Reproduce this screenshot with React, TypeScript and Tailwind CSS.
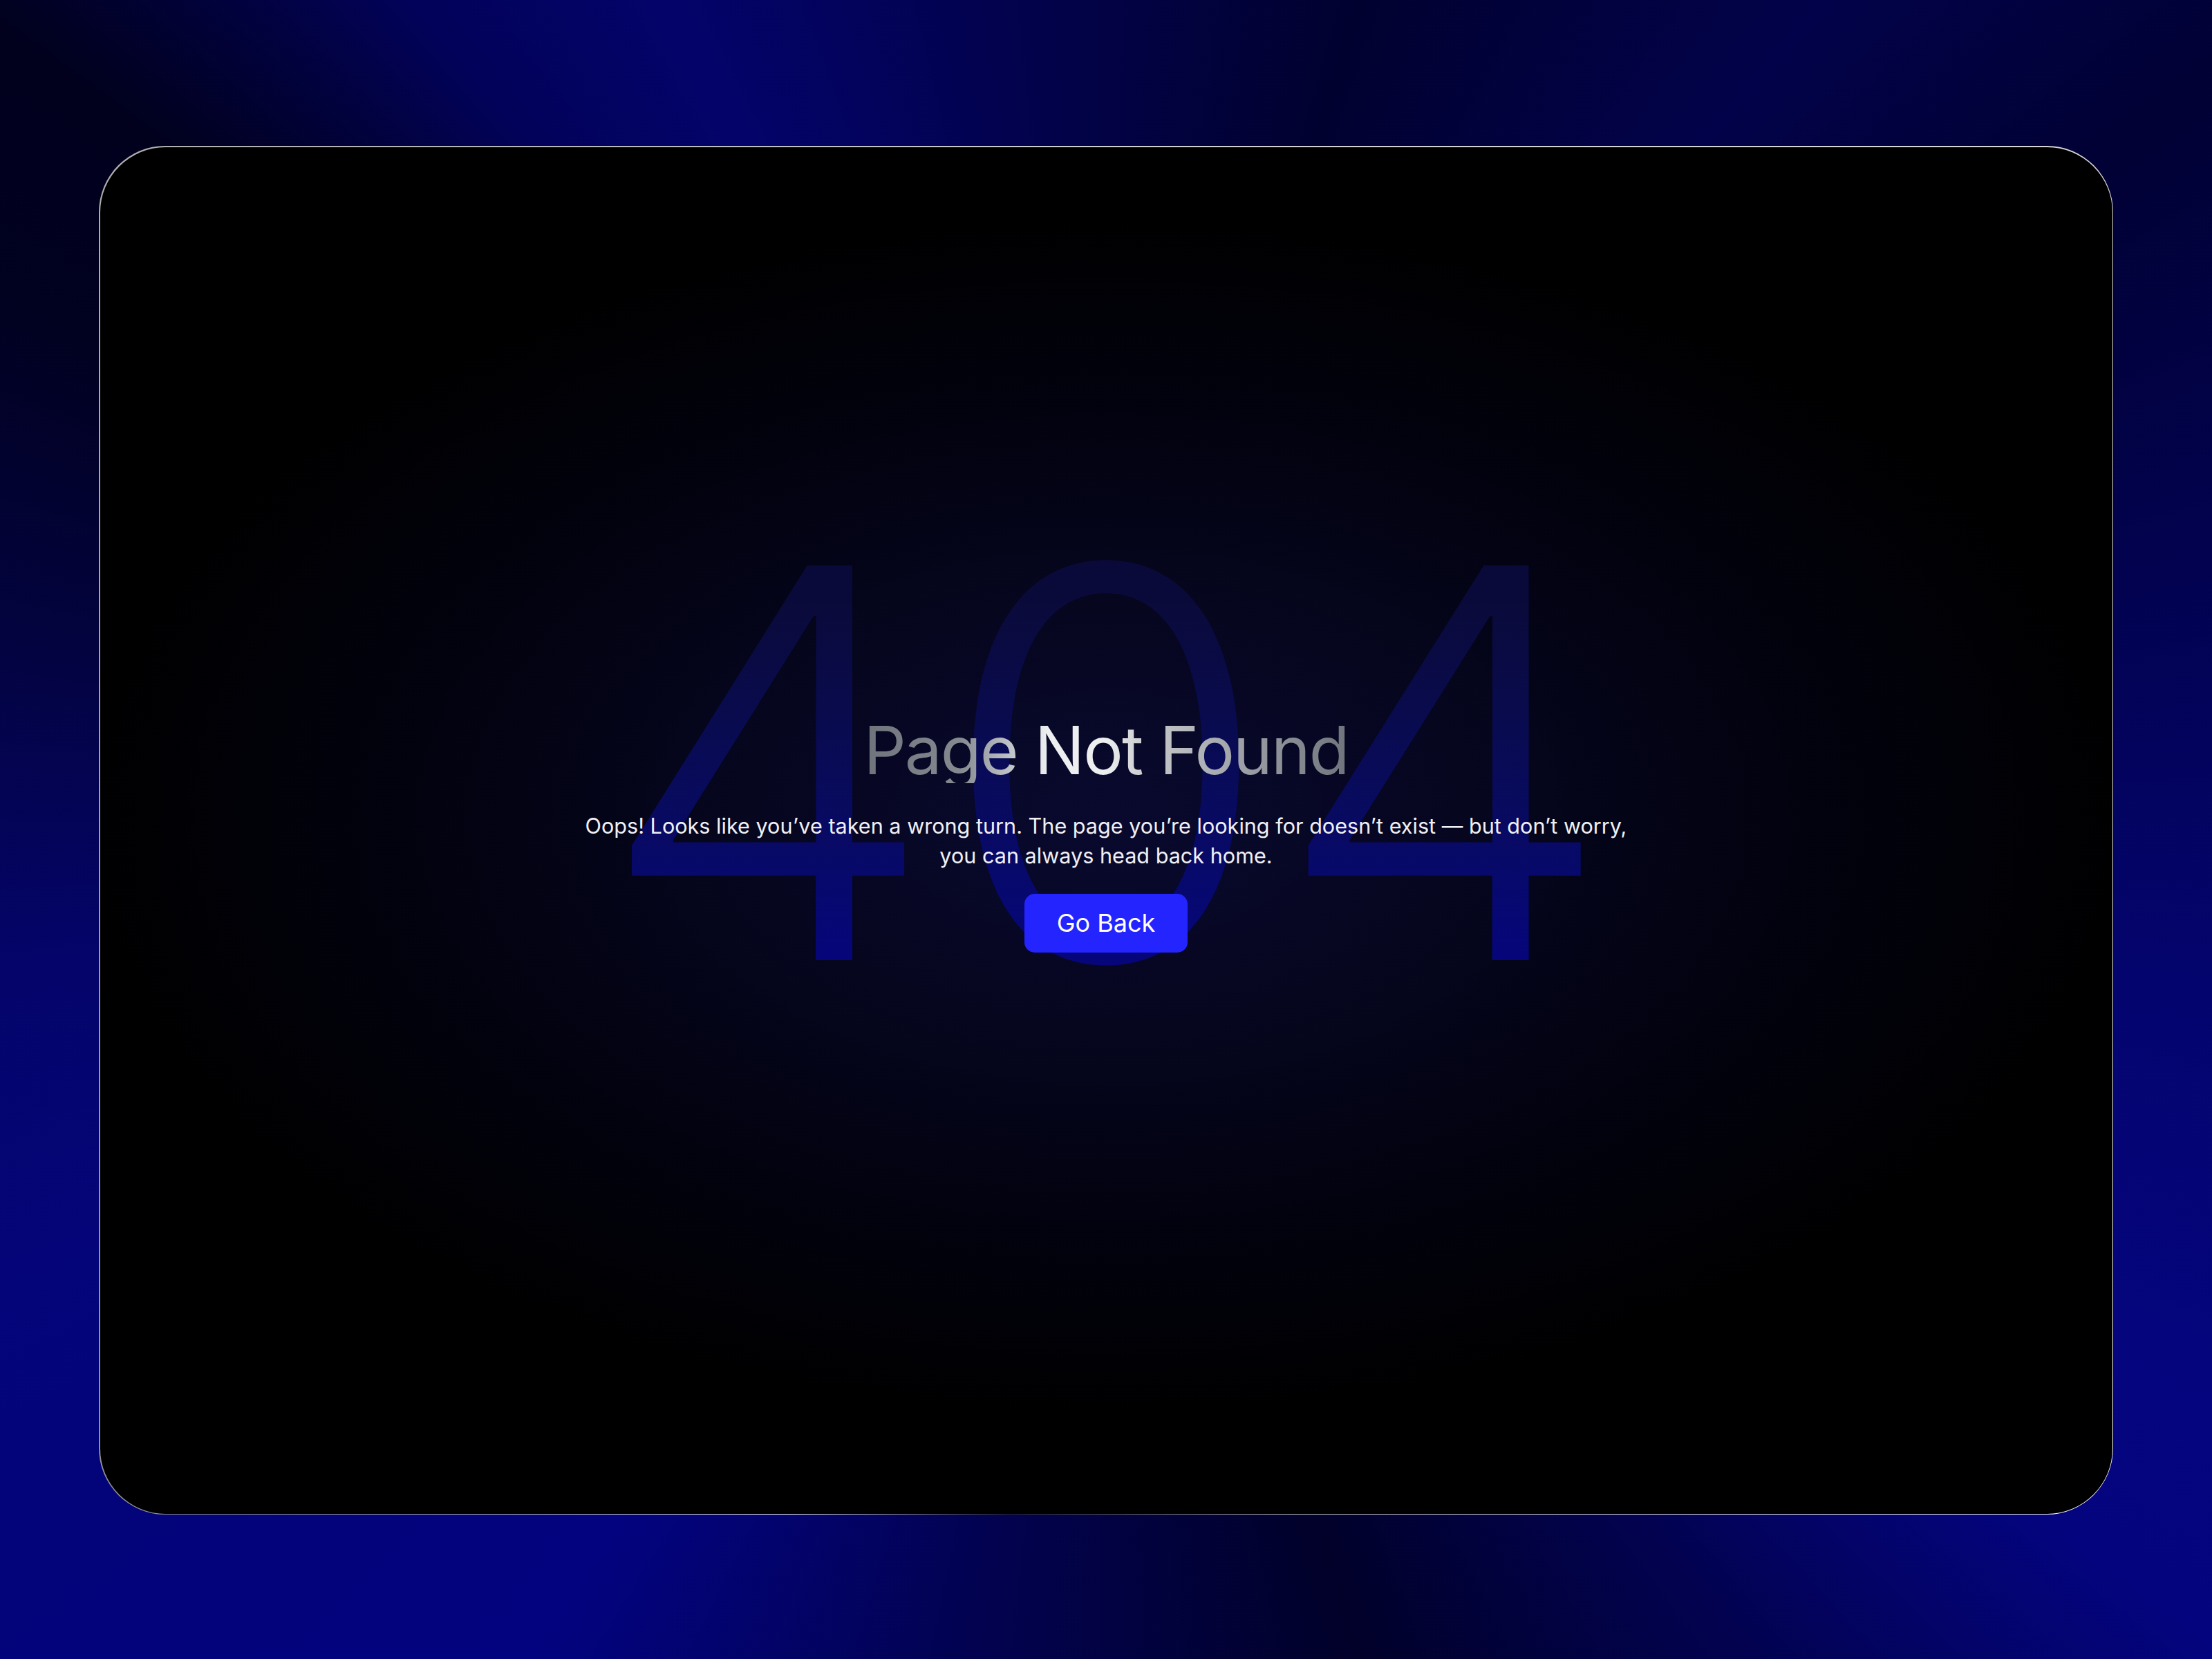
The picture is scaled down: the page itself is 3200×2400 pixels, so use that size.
import React from "react";

export default function App() {
  return (
    <div className="h-screen w-full overflow-hidden px-[143px] pt-[211px] pb-[209px] font-['Inter',sans-serif] bg-[conic-gradient(from_0deg_at_50%_50%,#020245_0deg,#010130_17deg,#02024a_41deg,#010135_56deg,#020250_76deg,#04046e_98deg,#05057f_118deg,#04047f_126deg,#020250_142deg,#01012a_163deg,#020250_189deg,#03037f_215deg,#03037a_235deg,#05057a_247deg,#04046a_263deg,#030340_280deg,#010120_296deg,#01011e_306deg,#02025a_320deg,#03036a_332deg,#020250_351deg,#020245_360deg)]">
      <div className="h-full w-full rounded-[96px] p-[1.5px] bg-[conic-gradient(from_0deg_at_50%_50%,#cfcfcf_0deg,#dadada_90deg,#ffffff_130deg,#c4c4c4_165deg,#2a2a2a_188deg,#ffffff_205deg,#909090_235deg,#a0a0a0_270deg,#b4b4b4_315deg,#cfcfcf_360deg)]">
        <div className="relative flex h-full w-full flex-col items-center justify-center overflow-hidden rounded-[94.5px] bg-black bg-[radial-gradient(ellipse_1500px_880px_at_50%_49%,#09092f_0%,#06061f_35%,#020210_65%,#000000_100%)]">
          <div className="pointer-events-none absolute inset-0 flex select-none items-center justify-center">
            <span className="-translate-y-[98px] bg-linear-to-b from-[#0a0a3a] from-20% to-[#06067a] to-85% bg-clip-text text-[785px] font-light leading-none text-transparent">
              404
            </span>
          </div>
          <div className="relative flex flex-col items-center pt-[12px]">
            <h1 className="bg-[linear-gradient(to_right,#6f747c_0%,#858a91_20%,#eceef0_38%,#eceef0_50%,#c8cacd_58%,#6f747c_100%)] bg-clip-text text-[96px] font-normal leading-none tracking-[-0.02em] text-transparent">
              Page Not Found
            </h1>
            <p className="mt-[40px] text-center text-[30.6px] font-normal leading-[43px] text-[#f0f0f4]">
              Oops! Looks like you’ve taken a wrong turn. The page you’re looking for doesn’t exist — but don’t worry,
              <br />
              you can always head back home.
            </p>
            <button className="mt-[34px] flex h-[85px] items-center rounded-[15px] bg-[#2424ff] px-[47px] text-[36px] font-normal text-white">
              Go Back
            </button>
          </div>
        </div>
      </div>
    </div>
  );
}
